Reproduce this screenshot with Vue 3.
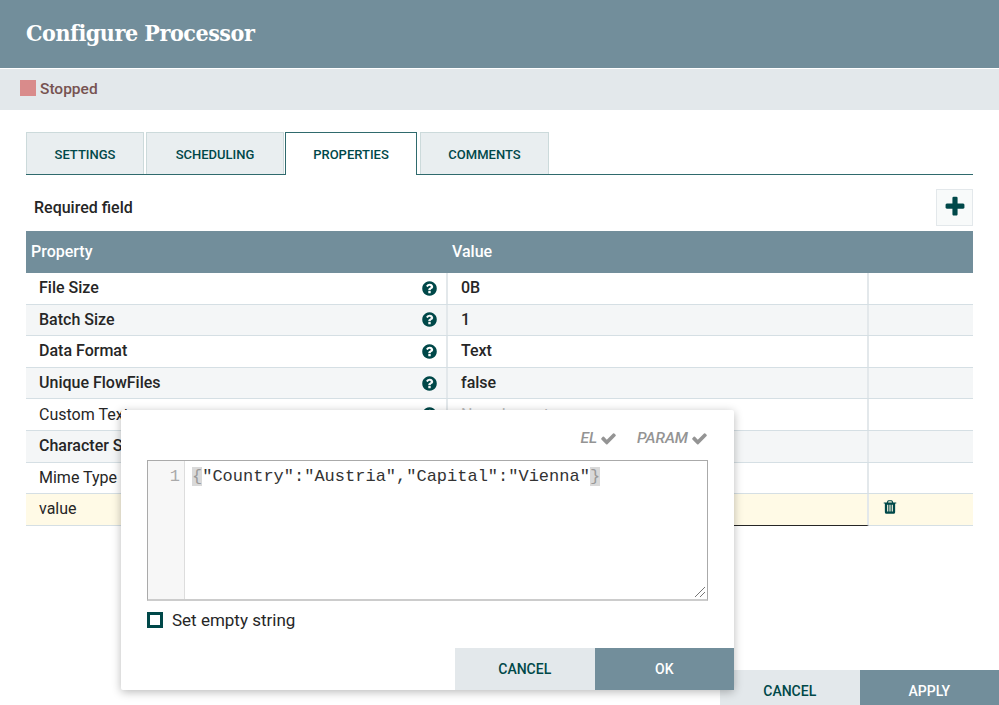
<template>
  <div class="dialog">
    <header class="title">Configure Processor</header>
    <div class="status">
      <span class="status-icon"></span>
      <span class="status-text">Stopped</span>
    </div>

    <main class="content">
      <nav class="tabs">
        <div
          v-for="tab in tabs"
          :key="tab.name"
          class="tab"
          :class="{ active: tab.name === 'PROPERTIES' }"
          :style="{ width: tab.width + 'px' }"
        >
          {{ tab.name }}
        </div>
      </nav>

      <div class="toolbar">
        <span class="required">Required field</span>
        <button class="add-btn">
          <svg viewBox="0 0 1792 1792" width="24" height="24"><path :d="plusPath" /></svg>
        </button>
      </div>

      <div class="table">
        <div class="table-head">
          <div class="head-cell">Property</div>
          <div class="head-cell">Value</div>
        </div>
        <div
          v-for="(row, i) in rows"
          :key="row.name"
          class="row"
          :class="{ odd: i % 2 === 1, edited: row.name === 'value' }"
        >
          <div class="cell prop-col" :class="{ bold: row.required }">
            <span>{{ row.name }}</span>
            <svg v-if="row.help" class="help" viewBox="0 0 1792 1792" width="17" height="17"><path :d="helpPath" /></svg>
          </div>
          <div class="cell value-col" :class="{ bold: row.required, unset: row.unset, editing: row.name === 'value' }">
            {{ row.value }}
          </div>
          <div class="cell action-col">
            <svg v-if="row.name === 'value'" class="trash" viewBox="0 0 1792 1792" width="16" height="16"><path :d="trashPath" /></svg>
          </div>
        </div>
      </div>
    </main>

    <footer class="footer">
      <button class="btn secondary">CANCEL</button>
      <button class="btn primary">APPLY</button>
    </footer>

    <div class="editor-popup">
      <div class="support">
        <span>EL</span>
        <svg viewBox="0 0 1792 1792" width="17" height="17"><path :d="checkPath" /></svg>
        <span class="param">PARAM</span>
        <svg viewBox="0 0 1792 1792" width="17" height="17"><path :d="checkPath" /></svg>
      </div>
      <div class="code-box">
        <div class="gutter">1</div>
        <div class="code"><span class="bracket">{</span>"Country":"Austria","Capital":"Vienna"<span class="bracket">}</span></div>
        <svg class="resize" viewBox="0 0 12 12" width="12" height="12">
          <path d="M1 11 L11 1 M6 11 L11 6" />
        </svg>
      </div>
      <label class="empty-string">
        <span class="checkbox"></span>
        Set empty string
      </label>
      <div class="popup-actions">
        <button class="btn secondary">CANCEL</button>
        <button class="btn primary">OK</button>
      </div>
    </div>
  </div>
</template>

<script setup>
const tabs = [
  { name: 'SETTINGS', width: 118 },
  { name: 'SCHEDULING', width: 138 },
  { name: 'PROPERTIES', width: 132 },
  { name: 'COMMENTS', width: 129 },
]

const rows = [
  { name: 'File Size', value: '0B', required: true, help: true },
  { name: 'Batch Size', value: '1', required: true, help: true },
  { name: 'Data Format', value: 'Text', required: true, help: true },
  { name: 'Unique FlowFiles', value: 'false', required: true, help: true },
  { name: 'Custom Text', value: 'No value set', unset: true, help: true },
  { name: 'Character Set', value: '', required: true, help: true },
  { name: 'Mime Type', value: '', help: true },
  { name: 'value', value: '' },
]

const helpPath = 'M1024 1376v-192q0-14-9-23t-23-9h-192q-14 0-23 9t-9 23v192q0 14 9 23t23 9h192q14 0 23-9t9-23zm256-672q0-88-55.5-163t-138.5-116-170-41q-243 0-371 213-15 24 8 42l132 100q7 6 19 6 16 0 25-12 53-68 86-92 34-24 86-24 48 0 85.5 26t37.5 59q0 38-20 61t-68 45q-63 28-115.5 86.5t-52.5 125.5v36q0 14 9 23t23 9h192q14 0 23-9t9-23q0-19 21.5-49.5t54.5-49.5q32-18 49-28.5t46-35 44.5-48 28-60.5 12.5-81zm384 192q0 209-103 385.5t-279.5 279.5-385.5 103-385.5-103-279.5-279.5-103-385.5 103-385.5 279.5-279.5 385.5-103 385.5 103 279.5 279.5 103 385.5z'
const trashPath = 'M704 1376v-704q0-14-9-23t-23-9h-64q-14 0-23 9t-9 23v704q0 14 9 23t23 9h64q14 0 23-9t9-23zm256 0v-704q0-14-9-23t-23-9h-64q-14 0-23 9t-9 23v704q0 14 9 23t23 9h64q14 0 23-9t9-23zm256 0v-704q0-14-9-23t-23-9h-64q-14 0-23 9t-9 23v704q0 14 9 23t23 9h64q14 0 23-9t9-23zm-544-992h448l-48-117q-7-9-17-11h-317q-10 2-17 11zm928 32v64q0 14-9 23t-23 9h-96v948q0 83-47 143.5t-113 60.5h-832q-66 0-113-58.5t-47-141.5v-952h-96q-14 0-23-9t-9-23v-64q0-14 9-23t23-9h309l70-167q15-37 54-63t79-26h320q40 0 79 26t54 63l70 167h309q14 0 23 9t9 23z'
const checkPath = 'M1671 566q0 40-28 68l-724 724-136 136q-28 28-68 28t-68-28l-136-136-362-362q-28-28-28-68t28-68l136-136q28-28 68-28t68 28l294 295 656-657q28-28 68-28t68 28l136 136q28 28 28 68z'
const plusPath = 'M1600 736v192q0 40-28 68t-68 28h-416v416q0 40-28 68t-68 28h-192q-40 0-68-28t-28-68v-416h-416q-40 0-68-28t-28-68v-192q0-40 28-68t68-28h416v-416q0-40 28-68t68-28h192q40 0 68 28t28 68v416h416q40 0 68 28t28 68z'
</script>

<style>
html,
body {
  margin: 0;
  background: #fff;
}
</style>

<style scoped>
.dialog {
  position: relative;
  display: flex;
  flex-direction: column;
  height: 705px;
  overflow: hidden;
  font-family: Roboto, "Liberation Sans", sans-serif;
  color: #262626;
  background: #fff;
}

.title {
  flex: none;
  height: 68px;
  padding: 0 26px;
  line-height: 66px;
  font-family: "DejaVu Serif Condensed", "DejaVu Serif", serif;
  font-size: 23px;
  font-weight: 700;
  letter-spacing: -0.45px;
  color: #fff;
  background: #728e9b;
}

.status {
  flex: none;
  display: flex;
  align-items: center;
  gap: 4px;
  height: 41px;
  margin-top: 1px;
  padding: 0 20px 2px;
  box-sizing: border-box;
  background: #e3e8eb;
}

.status-icon {
  width: 16px;
  height: 16px;
  margin-top: -2px;
  background: #d98b8b;
}

.status-text {
  font-size: 15.5px;
  font-weight: 500;
  color: #775351;
}

.content {
  flex: 1;
  min-height: 0;
  padding: 22px 26px 0;
}

.tabs {
  display: flex;
  gap: 2px;
  height: 43px;
  box-sizing: border-box;
  border-bottom: 1px solid #2f6a6d;
}

.tab {
  height: 42px;
  line-height: 44px;
  box-sizing: border-box;
  text-align: center;
  font-size: 13px;
  font-weight: 500;
  color: #004849;
  background: #e9eef0;
  border: 1px solid #ccdadb;
  border-bottom: none;
}

.tab.active {
  height: 43px;
  margin: 0 1px 0 -1px;
  background: #fff;
  border: 1px solid #2f6a6d;
  border-bottom: none;
}

.toolbar {
  display: flex;
  align-items: center;
  justify-content: space-between;
  height: 56px;
  padding: 8px 0 0 8px;
  box-sizing: border-box;
}

.required {
  font-size: 16px;
  font-weight: 500;
}

.add-btn {
  display: flex;
  align-items: center;
  justify-content: center;
  width: 37px;
  height: 37px;
  padding: 0;
  background: #f8fafa;
  border: 1px solid #e3e8eb;
}

.add-btn svg {
  fill: #004849;
}

.table-head {
  display: flex;
  height: 42px;
  line-height: 41px;
  font-size: 16px;
  font-weight: 500;
  color: #fff;
  background: #728e9b;
}

.head-cell {
  width: 421px;
  box-sizing: border-box;
  padding-left: 5px;
}

.prop-col {
  width: 422px;
}

.value-col {
  width: 421px;
}

.action-col {
  width: 104px;
}

.row {
  display: flex;
  height: 31.6px;
  box-sizing: border-box;
  border-bottom: 1px solid #d5dfe4;
}

.row.odd {
  background: #f4f6f7;
}

.row.edited {
  background: #fffae6;
}

.cell {
  box-sizing: border-box;
  display: flex;
  align-items: center;
  font-size: 16px;
  line-height: 28px;
  border-right: 2px solid #e3e8eb;
}

.cell.prop-col {
  justify-content: space-between;
  padding: 0 8px 0 13px;
}

.cell.value-col {
  padding-left: 13px;
}

.cell.action-col {
  padding: 0 0 4px 13px;
  border-right: none;
}

.bold {
  font-weight: 500;
}

.unset {
  color: #bbb;
}

.editing {
  height: 32px;
  border-bottom: 1px solid #262626;
}

.help,
.trash {
  fill: #004849;
}

.footer {
  flex: none;
  display: flex;
  justify-content: flex-end;
  height: 35px;
  overflow: hidden;
}

.btn {
  width: 139.5px;
  height: 42px;
  padding: 0;
  border: none;
  font-family: Roboto, "Liberation Sans", sans-serif;
  font-size: 14px;
  font-weight: 500;
}

.btn.secondary {
  color: #004849;
  background: #e3e8eb;
}

.btn.primary {
  color: #fff;
  background: #728e9b;
}

.editor-popup {
  position: absolute;
  left: 121px;
  top: 410px;
  width: 613px;
  height: 280px;
  padding: 0 26px;
  box-sizing: border-box;
  background: #fff;
  border-radius: 2px;
  box-shadow: 0 2px 10px rgba(0, 0, 0, 0.28);
}

.support {
  display: flex;
  align-items: center;
  justify-content: flex-end;
  gap: 3px;
  height: 50px;
  padding-top: 6px;
  box-sizing: border-box;
  font-size: 15.5px;
  font-style: italic;
  font-weight: 500;
  color: #949494;
}

.support svg {
  fill: #949494;
}

.param {
  margin-left: 17px;
}

.code-box {
  position: relative;
  display: flex;
  height: 141px;
  box-sizing: border-box;
  border: 1px solid #aaa;
  border-bottom: 2px solid #ccc;
}

.gutter {
  width: 37px;
  padding: 2px 4px 0 0;
  box-sizing: border-box;
  text-align: right;
  font-family: "Liberation Mono", monospace;
  font-size: 17px;
  line-height: 28px;
  color: #aaa;
  background: #f7f7f7;
  border-right: 1px solid #ddd;
}

.code {
  padding: 2px 0 0 7px;
  font-family: "Liberation Mono", monospace;
  font-size: 17px;
  line-height: 28px;
  white-space: pre;
  color: #333;
}

.bracket {
  color: #999;
  background: #d9d9d9;
}

.resize {
  position: absolute;
  right: 1px;
  bottom: 1px;
  fill: none;
  stroke: #777;
  stroke-width: 1;
}

.empty-string {
  display: flex;
  align-items: center;
  gap: 9px;
  height: 38px;
  font-size: 17px;
}

.checkbox {
  width: 16px;
  height: 16px;
  box-sizing: border-box;
  border: 3px solid #004849;
}

.popup-actions {
  position: absolute;
  right: 0;
  bottom: 0;
  display: flex;
}
</style>
